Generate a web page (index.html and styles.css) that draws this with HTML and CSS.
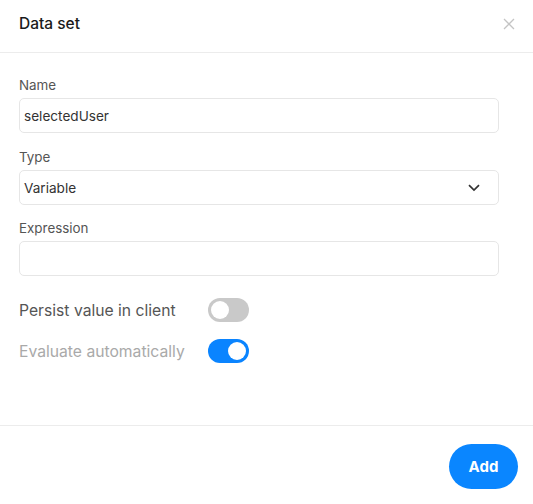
FILE: index.html
```html
<!DOCTYPE html>
<html>
<head>
<meta charset="utf-8">
<link rel="stylesheet" href="styles.css">
</head>
<body>
<div class="dialog">
  <header class="head">
    <h1 class="title">Data set</h1>
    <button class="close" aria-label="Close">
      <svg width="12" height="12" viewBox="0 0 12 12"><path d="M1 1L11 11M11 1L1 11" stroke="#c4c4c4" stroke-width="1.3" fill="none"/></svg>
    </button>
  </header>
  <main class="body">
    <div class="field">
      <label class="label">Name</label>
      <div class="input">selectedUser</div>
    </div>
    <div class="field">
      <label class="label">Type</label>
      <div class="input select">
        <span>Variable</span>
        <svg width="12" height="8" viewBox="0 0 12 8"><path d="M1 1.2L6 6L11 1.2" stroke="#333" stroke-width="1.7" fill="none"/></svg>
      </div>
    </div>
    <div class="field">
      <label class="label">Expression</label>
      <div class="input"></div>
    </div>
    <div class="switches">
      <div class="row">
        <span class="row-label">Persist value in client</span>
        <span class="toggle"><span class="knob"></span></span>
      </div>
      <div class="row muted">
        <span class="row-label">Evaluate automatically</span>
        <span class="toggle on"><span class="knob"></span></span>
      </div>
    </div>
  </main>
  <footer class="foot">
    <button class="add">Add</button>
  </footer>
</div>
</body>
</html>
```
FILE: styles.css
```css
* { box-sizing: border-box; }
html, body { margin: 0; padding: 0; background: #fff; }
body { font-family: Inter, "Noto Sans", sans-serif; color: #333; }
.dialog { width: 533px; height: 504px; display: flex; flex-direction: column; }
.head {
  display: flex; align-items: center; justify-content: space-between;
  height: 53px; padding: 0 18px 5px 19px;
  border-bottom: 1px solid #ececec;
}
.title { margin: 0; font-size: 15.5px; font-weight: 500; line-height: 20px; color: #1a1a1a; }
.close { border: 0; background: none; padding: 0; width: 12px; height: 12px; display: flex; }
.body { flex: 1; padding: 24px 34px 0 19px; }
.field { display: flex; flex-direction: column; margin-bottom: 16px; }
.field:nth-child(2) { margin-bottom: 15px; }
.label { font-size: 13.4px; line-height: 16px; color: #555; margin-bottom: 5px; }
.input {
  height: 35px; border: 1px solid #e6e6e6; border-radius: 5px;
  padding: 0 4px; font-size: 13.6px; color: #333;
  display: flex; align-items: center;
}
.select { justify-content: space-between; padding-right: 18px; }
.switches { margin-top: 22px; display: flex; flex-direction: column; gap: 17px; }
.row { display: grid; grid-template-columns: 189px auto; align-items: center; height: 24px; }
.row-label { font-size: 15.7px; color: #555; }
.row.muted .row-label { color: #a9a9a9; }
.toggle {
  width: 41px; height: 24px; border-radius: 12px; background: #c9c9c9;
  display: flex; align-items: center; padding: 0 3px;
}
.toggle.on { background: #0a84ff; justify-content: flex-end; }
.knob { width: 18px; height: 18px; border-radius: 50%; background: #fff; }
.foot {
  height: 79px; border-top: 1px solid #ececec;
  display: flex; justify-content: flex-end; align-items: flex-start;
  padding: 18px 15px 0 0;
}
.add {
  width: 69px; height: 45px; border: 0; border-radius: 23px;
  background: #0a86ff; color: #fff; font-family: Inter, sans-serif;
  font-size: 15px; font-weight: 700;
}
```
